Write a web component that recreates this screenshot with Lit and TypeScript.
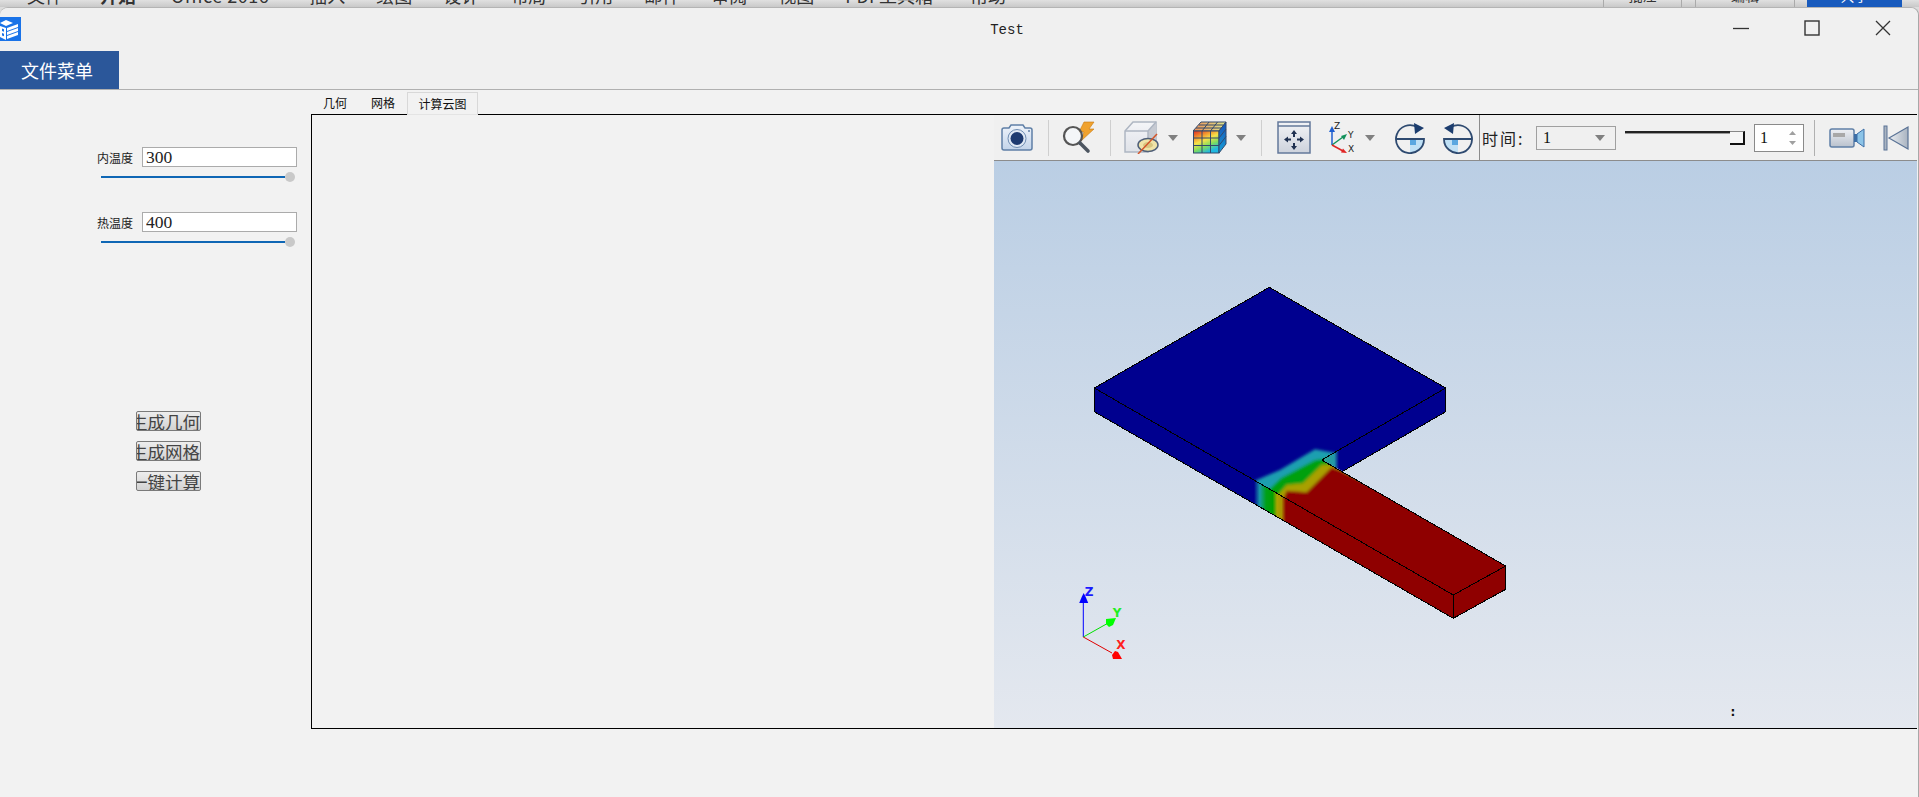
import { LitElement, html, css, svg, unsafeCSS } from 'lit';
import { customElement } from 'lit/decorators.js';

const CJK = unsafeCSS(`"Noto Sans CJK SC", "Liberation Sans", sans-serif`);

const topMenu = ['文件', '开始', 'Office 2016', '插入', '绘图', '设计', '布局', '引用', '邮件', '审阅', '视图', 'PDF工具箱', '帮助'];

const caret = html`<svg class="caret" width="10" height="6" viewBox="0 0 10 6"><path d="M0 0h10L5 6z" fill="#808080"/></svg>`;

const rotateIcon = (flip: boolean) => html`
  <svg class=${flip ? 'rot-l' : 'rot-r'} width="32" height="32" viewBox="0 0 32 32">
    <g transform=${flip ? 'translate(32 0) scale(-1 1)' : ''}>
      <path d="M16 17h14a14 14 0 0 1-14 14z" fill="#bfe0f5"/>
      <path d="M16 17h6v6h-6z" fill="#5aa7e0"/>
      <path d="M23 5A14 14 0 1 0 30 17H2" fill="none" stroke="#2e4a70" stroke-width="1.800"/>
      <path d="M20 1l10 5-9 6z" fill="#1c3d6e"/>
    </g>
  </svg>`;

@customElement('app-root')
export class AppRoot extends LitElement {
  static styles = css`
    :host {
      display: flex;
      flex-direction: column;
      width: 1919px;
      height: 797px;
      overflow: hidden;
      background: #dcdcdc;
      font-family: ${CJK};
      color: #111;
    }
    .strip {
      height: 7px;
      flex: none;
      box-sizing: border-box;
      display: flex;
      align-items: flex-end;
      gap: 31px;
      padding: 0 0 3px 27px;
      overflow: hidden;
      background: linear-gradient(#e0e0e0, #c9c9c9);
      font-size: 18px;
      line-height: 18px;
      color: #333;
      white-space: nowrap;
    }
    .strip .open { font-weight: 700; margin-left: 6px; margin-right: 4px; }
    .strip .wide { margin-right: 9px; letter-spacing: 0.5px; }
    .strip .pdf { margin-right: 6px; }
    .strip-right { margin-left: auto; margin-bottom: -3px; display: flex; height: 7px; font-size: 14px; }
    .cell {
      border-left: 1px solid #aaa;
      height: 7px;
      box-sizing: border-box;
      padding-bottom: 3px;
      display: flex;
      align-items: flex-end;
      justify-content: center;
    }
    .c1 { width: 78px; }
    .c2 { width: 14px; }
    .c3 { width: 99px; }
    .c4 { width: 13px; }
    .share {
      width: 95px;
      height: 7px;
      box-sizing: border-box;
      padding-bottom: 3px;
      background: #185abd;
      margin-right: 17px;
      color: #fff;
      display: flex;
      align-items: flex-end;
      justify-content: center;
    }

    .window {
      flex: 1;
      min-height: 0;
      display: flex;
      flex-direction: column;
      background: #f2f2f2;
      border-top: 1px solid #b4b4b4;
      border-right: 1px solid #a8a8a8;
      border-radius: 8px 8px 0 0;
    }
    .title {
      height: 43px;
      flex: none;
      display: flex;
      align-items: center;
      background: #f0f0f0;
      border-radius: 8px 8px 0 0;
    }
    .logo { flex: none; align-self: flex-start; margin-top: 9px; }
    .title-text {
      flex: 1;
      text-align: center;
      padding-left: 288px;
      font: 14px "Liberation Mono", monospace;
      color: #222;
    }
    .wbtn { width: 71px; flex: none; display: flex; justify-content: center; margin-bottom: 3px; }
    .menu { height: 38px; flex: none; background: #f0f0f0; border-bottom: 1px solid #b0b0b0; }
    .menu-btn {
      width: 119px;
      height: 38px;
      box-sizing: border-box;
      padding-left: 21px;
      background: #2b579a;
      color: #fff;
      font-size: 18px;
      line-height: 38px;
    }

    .body { flex: 1; min-height: 0; display: flex; }
    .side {
      width: 311px;
      flex: none;
      box-sizing: border-box;
      padding: 57px 14px 0 0;
      display: flex;
      flex-direction: column;
    }
    .field { display: flex; justify-content: flex-end; align-items: center; height: 20px; gap: 9px; }
    .field label { font-size: 12px; color: #222; }
    .field input {
      width: 155px;
      height: 20px;
      box-sizing: border-box;
      border: 1px solid #ababab;
      background: #fff;
      padding: 0 3px;
      margin: 0;
      outline: none;
      font: 17.5px "Liberation Serif", serif;
      color: #222;
    }
    .range { margin: 5px 2px 30px 101px; height: 10px; display: flex; align-items: center; }
    .range .fill { flex: 1; height: 2px; background: #0f67b5; }
    .range .knob { width: 10px; height: 10px; border-radius: 50%; background: #c9c9c9; }
    .actions { margin: 134px 0 0 136px; display: flex; flex-direction: column; gap: 10px; }
    .actions button {
      width: 65px;
      height: 20px;
      padding: 0;
      box-sizing: border-box;
      border: 1px solid #7a7a7a;
      border-radius: 2px;
      background: linear-gradient(#ededed, #d2d2d2);
      display: flex;
      justify-content: flex-end;
      align-items: center;
      overflow: hidden;
      white-space: nowrap;
      font: 17.5px ${CJK};
      color: #444;
    }

    .main { flex: 1; min-width: 0; display: flex; flex-direction: column; padding-top: 2px; }
    .tabs { display: flex; height: 23px; margin-bottom: -1px; position: relative; z-index: 1; font-size: 12px; }
    .tab { padding: 0 12px; line-height: 21px; color: #111; box-sizing: border-box; white-space: nowrap; }
    .tab.active {
      width: 71px;
      border: 1px solid #d8d8d8;
      border-bottom-color: #e4e4e4;
      background: #f2f2f2;
      padding: 0;
      text-align: center;
    }
    .frame {
      height: 615px;
      box-sizing: border-box;
      margin-right: 1px;
      border: 1px solid #000;
      border-right: 0;
      display: flex;
    }
    .blank { flex: 1; }
    .viewer { width: 923px; flex: none; display: flex; flex-direction: column; }
    .bar {
      height: 46px;
      flex: none;
      box-sizing: border-box;
      border-bottom: 1px solid #8c8c8c;
      display: flex;
      align-items: center;
      background: #f0f0f0;
    }
    .bar svg { flex: none; display: block; }
    .sep { width: 1px; height: 36px; background: #cfcfcf; flex: none; }
    .cam { margin-left: 6px; }
    .s1 { margin-left: 14px; }
    .mag { margin-left: 11px; }
    .s2 { margin-left: 14px; }
    .box { margin-left: 13px; }
    .caret { margin-left: 9px; }
    .heat { margin-left: 15px; }
    .s3 { margin-left: 15px; }
    .fit { margin-left: 15px; }
    .axes { margin-left: 17px; }
    .rot-r { margin-left: 19px; }
    .rot-l { margin-left: 16px; }
    .s4 { margin-left: 5px; height: 45px; background: #8c8c8c; }
    .time { margin-left: 2px; width: 54px; flex: none; font-size: 16px; letter-spacing: 2px; color: #222; }
    .combo {
      width: 80px;
      height: 24px;
      box-sizing: border-box;
      border: 1px solid #a0a0a0;
      display: flex;
      align-items: center;
      justify-content: space-between;
      padding: 0 10px 0 6px;
      font: 16px "Liberation Serif", serif;
      flex: none;
    }
    .combo .caret { margin-left: 0; }
    .track { margin-left: 9px; width: 120px; height: 14px; flex: none; display: flex; }
    .track .line { flex: 1; height: 3px; box-sizing: border-box; border-top: 2px solid #222; border-bottom: 1px solid #999; }
    .track .thumb {
      width: 15px;
      height: 14px;
      box-sizing: border-box;
      border-right: 2px solid #111;
      border-bottom: 2px solid #111;
      border-top: 1px solid #888;
      background: #f6f6f6;
    }
    .spin {
      margin-left: 9px;
      width: 50px;
      height: 28px;
      box-sizing: border-box;
      border: 1px solid #8a8a8a;
      background: #fff;
      display: flex;
      align-items: center;
      justify-content: space-between;
      padding: 0 7px 0 5px;
      font: 16px "Liberation Serif", serif;
      flex: none;
    }
    .s5 { margin-left: 10px; background: #b0b0b0; }
    .video { margin-left: 14px; }
    .skip { margin-left: 18px; }
    .scene { flex: 1; min-height: 0; background: linear-gradient(#bacee4, #e4e8ef); }
    .scene svg { display: block; }
    .scene text { font-family: "DejaVu Sans", sans-serif; font-weight: 700; font-size: 12px; text-anchor: middle; }
  `;

  private scene() {
    const top = '1269.3,287.3 1094.3,388 1453.3,595 1505.7,566 1321.7,460 1445.7,388';
    return svg`
      <defs>
        <linearGradient id="front" gradientUnits="userSpaceOnUse" x1="1254" x2="1286" y1="0" y2="0">
          <stop offset="0" stop-color="#00008f"/>
          <stop offset=".18" stop-color="#189aa8"/>
          <stop offset=".38" stop-color="#00a018"/>
          <stop offset=".58" stop-color="#00a000"/>
          <stop offset=".72" stop-color="#a8a400"/>
          <stop offset=".86" stop-color="#a89400"/>
          <stop offset="1" stop-color="#8f0000"/>
        </linearGradient>
        <linearGradient id="inner" gradientUnits="userSpaceOnUse" x1="1322" x2="1339" y1="0" y2="0">
          <stop offset="0" stop-color="#30a890"/>
          <stop offset=".72" stop-color="#2298a8"/>
          <stop offset="1" stop-color="#00008f"/>
        </linearGradient>
        <clipPath id="topClip"><polygon points=${top}/></clipPath>
        <filter id="soft" x="-10%" y="-10%" width="120%" height="120%"><feGaussianBlur stdDeviation="1.700"/></filter>
      </defs>
      <polygon points=${top} fill="#00008f"/>
      <g clip-path="url(#topClip)">
        <g filter="url(#soft)">
          <polygon points="1255,480.700 1280,470 1315,449.300 1336.700,453.300 1420,520 1320,600" fill="#1f9fb0"/>
          <polygon points="1266.700,491.700 1281,478 1315,460 1330,458 1420,520 1320,600" fill="#00a010"/>
          <polygon points="1276.700,496.700 1286.700,485 1303,483.300 1321.700,465 1334,464 1420,520 1320,600" fill="#a8a000"/>
          <polygon points="1283.300,498.300 1286.700,490.700 1306.700,492.300 1331.700,467.300 1340,470 1520,560 1460,610 1320,600" fill="#8f0000"/>
        </g>
      </g>
      <polygon points="1094.300,388 1453.300,595 1453.300,618.300 1094.300,411.700" fill="url(#front)"/>
      <polygon points="1453.300,595 1505.700,566 1505.700,589.300 1453.300,618.300" fill="#8f0000"/>
      <polygon points="1321.700,460 1445.700,388 1445.700,411.700 1342.700,471.300" fill="url(#inner)"/>
      <g fill="none" stroke="#000" stroke-width="1" shape-rendering="crispEdges">
        <polyline points="1094.300,411.700 1094.300,388 1269.300,287.300 1445.700,388 1445.700,411.700 1342.700,471.300"/>
        <polyline points="1094.300,388 1453.300,595 1505.700,566 1321.700,460 1445.700,388"/>
        <polyline points="1094.300,411.700 1453.300,618.300 1505.700,589.300 1505.700,566"/>
        <line x1="1453.300" y1="595" x2="1453.300" y2="618.300"/>
      </g>
      <line x1="1083.300" y1="637" x2="1083.300" y2="600" stroke="#0000ff" stroke-width="1"/>
      <path d="M1083.700 593l2 4 2.500 6h-9l2.500-6z" fill="#0000ff"/>
      <text x="1089" y="596" fill="#1a1aff">Z</text>
      <line x1="1083.300" y1="637" x2="1110" y2="622" stroke="#00e000" stroke-width="1"/>
      <path d="M1116 618l-3 7-4 2-3-3 0-5z" fill="#00ff00"/>
      <text x="1117" y="616.500" fill="#22ee22">Y</text>
      <line x1="1083.300" y1="637" x2="1112" y2="653" stroke="#e00000" stroke-width="1"/>
      <path d="M1122 659h-9l-1-4 3-4 3 1z" fill="#ff0000"/>
      <text x="1121" y="648.500" fill="#ff2020">X</text>
      <text x="1733" y="716" fill="#111">:</text>
    `;
  }

  render() {
    return html`
      <div class="strip">
        ${topMenu.map((t, i) => html`<span class=${i === 1 ? 'open' : i === 2 ? 'wide' : i === 11 ? 'pdf' : ''}>${t}</span>`)}
        <div class="strip-right">
          <div class="cell c1">批注</div>
          <div class="cell c2"></div>
          <div class="cell c3">编辑</div>
          <div class="cell c4"></div>
          <div class="share">共享</div>
        </div>
      </div>
      <div class="window">
        <div class="title">
          <svg class="logo" width="21" height="24" viewBox="0 0 21 24">
            <rect width="21" height="24" fill="#1a73e8"/>
            <path d="M0 6l6-3 7 3-7 3-6-3z" fill="#fff"/>
            <path d="M0 9l6 2v12L0 20z" fill="#fff"/>
            <path d="M2 11.500l2 .7v2.500l-2-.7zM2 16l2 .7v2.500l-2-.7z" fill="#1a73e8"/>
            <path d="M7 11l11-4v3L7 14zM7 15l11-4v3L7 18zM7 19l11-4v3L7 22z" fill="#fff"/>
          </svg>
          <div class="title-text">Test</div>
          <div class="wbtn"><svg width="16" height="16" viewBox="0 0 16 16"><path d="M0 8.500h16" stroke="#333" stroke-width="1.300"/></svg></div>
          <div class="wbtn"><svg width="16" height="16" viewBox="0 0 16 16"><rect x="1" y="1" width="14" height="14" fill="none" stroke="#333" stroke-width="1.400"/></svg></div>
          <div class="wbtn"><svg width="16" height="16" viewBox="0 0 16 16"><path d="M1 1l14 14M15 1L1 15" stroke="#333" stroke-width="1.300"/></svg></div>
        </div>
        <div class="menu"><div class="menu-btn">文件菜单</div></div>
        <div class="body">
          <div class="side">
            <div class="field"><label>内温度</label><input value="300" /></div>
            <div class="range"><div class="fill"></div><div class="knob"></div></div>
            <div class="field"><label>热温度</label><input value="400" /></div>
            <div class="range"><div class="fill"></div><div class="knob"></div></div>
            <div class="actions">
              <button>生成几何</button>
              <button>生成网格</button>
              <button>一键计算</button>
            </div>
          </div>
          <div class="main">
            <div class="tabs">
              <div class="tab">几何</div>
              <div class="tab">网格</div>
              <div class="tab active">计算云图</div>
            </div>
            <div class="frame">
              <div class="blank"></div>
              <div class="viewer">
                <div class="bar">
                  <svg class="cam" width="34" height="29" viewBox="0 0 34 29">
                    <defs><linearGradient id="camg" x1="0" x2="0" y1="0" y2="1"><stop offset="0" stop-color="#eef3fa"/><stop offset="1" stop-color="#c3d4ea"/></linearGradient></defs>
                    <path d="M2 7q0-2 2-2h5l2-3h12l2 3h5q2 0 2 2v18q0 2-2 2H4q-2 0-2-2z" fill="url(#camg)" stroke="#5f7fa6" stroke-width="1.500"/>
                    <circle cx="17" cy="15.500" r="9" fill="#dfe8f4" stroke="#6f8db2"/>
                    <circle cx="17" cy="15.500" r="6.500" fill="#1d3a70"/>
                    <circle cx="29" cy="8" r="1" fill="#5f7fa6"/>
                  </svg>
                  <div class="sep s1"></div>
                  <svg class="mag" width="36" height="33" viewBox="0 0 36 33">
                    <path d="M24 1h10l-5 7h5L21 20l3-9h-5z" fill="#f0a22e" stroke="#c77a10" stroke-width=".6"/>
                    <circle cx="13" cy="15" r="9" fill="#f6f8fb" fill-opacity=".75" stroke="#555" stroke-width="2.200"/>
                    <path d="M20 22l8 8" stroke="#4c5560" stroke-width="3.600" stroke-linecap="round"/>
                  </svg>
                  <div class="sep s2"></div>
                  <svg class="box" width="35" height="33" viewBox="0 0 35 33">
                    <defs><linearGradient id="boxg" x1="0" x2="0" y1="0" y2="1"><stop offset="0" stop-color="#f4f5f8"/><stop offset="1" stop-color="#dfe2e8"/></linearGradient></defs>
                    <path d="M1 10L9 1h23v20l-8 10H1z" fill="url(#boxg)" stroke="#aeb6c2" stroke-width="1.500"/>
                    <path d="M24 10l8-9v20l-8 10z" fill="#c6cad2"/>
                    <path d="M1 10h23v21M24 10l8-9" fill="none" stroke="#aeb6c2" stroke-width="1.500"/>
                    <ellipse cx="24" cy="24" rx="10" ry="6.500" fill="#efe3a8" stroke="#4f5f78" stroke-width="1.500"/>
                    <ellipse cx="24" cy="24" rx="5" ry="3" fill="#d8c680"/>
                    <path d="M14 33L33 13" stroke="#d2552a" stroke-width="1.500"/>
                  </svg>
                  ${caret}
                  <svg class="heat" width="34" height="33" viewBox="0 0 34 33">
                    <defs>
                      <linearGradient id="heatg" x1="0" x2=".5" y1="0" y2="1">
                        <stop offset="0" stop-color="#e02a24"/><stop offset=".3" stop-color="#f29a30"/><stop offset=".5" stop-color="#f6e24a"/><stop offset=".75" stop-color="#7edc60"/><stop offset="1" stop-color="#20b8e0"/>
                      </linearGradient>
                      <linearGradient id="heatt" x1="0" x2="1" y1="0" y2="0"><stop offset="0" stop-color="#ee9058"/><stop offset="1" stop-color="#dce68c"/></linearGradient>
                      <linearGradient id="heats" x1="0" x2="0" y1="0" y2="1"><stop offset="0" stop-color="#1550b8"/><stop offset="1" stop-color="#16a0d8"/></linearGradient>
                    </defs>
                    <path d="M0 10L8 1h25l-7 9z" fill="url(#heatt)" stroke="#33496b"/>
                    <rect x="0.500" y="10" width="25.500" height="22" fill="url(#heatg)" stroke="#33496b"/>
                    <path d="M26 10l7-9v22l-7 9z" fill="url(#heats)" stroke="#33496b"/>
                    <path d="M9 10v22M17.500 10v22M1 17h25M1 24.500h25M9 10l7-9M17.500 10l7-9M3 7h25M6 4h24M26 17l7-9M26 24.500l7-9" fill="none" stroke="#33496b" stroke-width="1"/>
                  </svg>
                  ${caret}
                  <div class="sep s3"></div>
                  <svg class="fit" width="34" height="33" viewBox="0 0 34 33">
                    <defs><linearGradient id="fitg" x1="0" x2="0" y1="0" y2="1"><stop offset="0" stop-color="#f2f3f6"/><stop offset="1" stop-color="#cdd2dc"/></linearGradient></defs>
                    <rect x="1" y="1" width="32" height="31" fill="url(#fitg)" stroke="#63789a" stroke-width="1.500"/>
                    <path d="M1 5h32" stroke="#63789a" stroke-width="1.500"/>
                    <path d="M17 9l3 4h-2v3h-2v-3h-2zM17 29l-3-4h2v-3h2v3h2zM7 18.500l4-3v2h3v2h-3v2zM27 18.500l-4 3v-2h-3v-2h3v-2z" fill="#1f3050"/>
                  </svg>
                  <svg class="axes" width="28" height="33" viewBox="0 0 28 33">
                    <path d="M4 24V9" stroke="#1f5fd0" stroke-width="1.500"/><path d="M4 5l3 6H1z" fill="#1f5fd0"/>
                    <path d="M4 24l11-8" stroke="#12915a" stroke-width="1.500"/><path d="M19 13l-3 6-3-4z" fill="#12915a"/>
                    <path d="M4 24l11 6" stroke="#e02525" stroke-width="1.500"/><path d="M19 32l-6-.500 2-4z" fill="#e02525"/>
                    <text x="6" y="8" font-size="9" font-family="DejaVu Sans, sans-serif" fill="#222">Z</text>
                    <text x="20" y="17" font-size="9" font-family="DejaVu Sans, sans-serif" fill="#222">Y</text>
                    <text x="20" y="31" font-size="9" font-family="DejaVu Sans, sans-serif" fill="#222">X</text>
                  </svg>
                  ${caret}
                  ${rotateIcon(false)}
                  ${rotateIcon(true)}
                  <div class="sep s4"></div>
                  <div class="time">时间:</div>
                  <div class="combo"><span>1</span>${caret}</div>
                  <div class="track"><div class="line"></div><div class="thumb"></div></div>
                  <div class="spin">
                    <span>1</span>
                    <svg width="7" height="14" viewBox="0 0 7 14"><path d="M3.500 0L7 4H0zM3.500 14L0 10h7z" fill="#a0a0a0"/></svg>
                  </div>
                  <div class="sep s5"></div>
                  <svg class="video" width="36" height="22" viewBox="0 0 36 22">
                    <defs><linearGradient id="vidg" x1="0" x2="0" y1="0" y2="1"><stop offset="0" stop-color="#eef0f4"/><stop offset="1" stop-color="#b9c1cd"/></linearGradient></defs>
                    <rect x="1" y="2" width="24" height="18" rx="2" fill="url(#vidg)" stroke="#5f7fa6" stroke-width="1.500"/>
                    <rect x="4" y="6" width="12" height="4" fill="#a8a8a8"/>
                    <path d="M25 7h3v8h-3z" fill="#3d6ea6"/>
                    <path d="M28 7l7-5v18l-7-5z" fill="#8cc4e8" stroke="#3d6ea6"/>
                  </svg>
                  <svg class="skip" width="26" height="26" viewBox="0 0 26 26">
                    <defs><linearGradient id="skipg" x1="0" x2="1" y1="0" y2="0"><stop offset="0" stop-color="#eceff3"/><stop offset="1" stop-color="#a9b3c0"/></linearGradient></defs>
                    <rect x="1" y="1" width="3" height="24" fill="#a9b3c0" stroke="#5a7396"/>
                    <path d="M25 2v22L6 13z" fill="url(#skipg)" stroke="#5a7396" stroke-width="1.200"/>
                  </svg>
                </div>
                <div class="scene">
                  <svg width="923" height="567" viewBox="994 161 923 567">${this.scene()}</svg>
                </div>
              </div>
            </div>
          </div>
        </div>
      </div>
    `;
  }
}
